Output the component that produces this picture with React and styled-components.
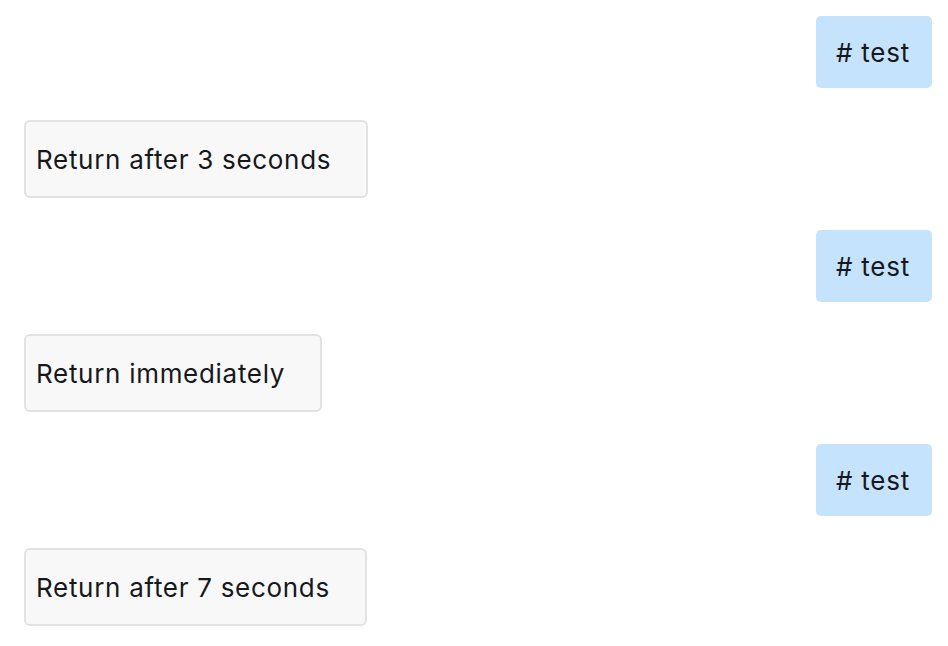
import React from "react";
import styled, { createGlobalStyle } from "styled-components";

const Global = createGlobalStyle`
  html, body { margin: 0; padding: 0; background: #ffffff; }
  body { font-family: Inter, "Noto Sans", "Liberation Sans", sans-serif; }
`;

const Chat = styled.div`
  display: flex;
  flex-direction: column;
  gap: 32px;
  padding: 16px 16px 16px 24px;
`;

const Row = styled.div`
  display: flex;
  justify-content: ${(p) => (p.$mine ? "flex-end" : "flex-start")};
`;

const UserBubble = styled.div`
  display: flex;
  align-items: center;
  height: 72px;
  box-sizing: border-box;
  padding: 0 22px 0 20px;
  background: #c5e3fd;
  border-radius: 5px;
  color: #16181c;
  font-size: 26px;
  letter-spacing: 0.75px;
`;

const BotBubble = styled.div`
  display: flex;
  align-items: center;
  height: 78px;
  box-sizing: border-box;
  padding: 0 35px 0 10px;
  background: #f8f8f8;
  border: 2px solid #e2e2e2;
  border-radius: 6px;
  color: #16181c;
  font-size: 26px;
  letter-spacing: 0.7px;
`;

const messages = [
  { mine: true, text: "# test" },
  { mine: false, text: "Return after 3 seconds" },
  { mine: true, text: "# test" },
  { mine: false, text: "Return immediately" },
  { mine: true, text: "# test" },
  { mine: false, text: "Return after 7 seconds" },
];

export default function App() {
  return (
    <>
      <Global />
      <Chat>
        {messages.map((m, i) => (
          <Row key={i} $mine={m.mine}>
            {m.mine ? <UserBubble>{m.text}</UserBubble> : <BotBubble>{m.text}</BotBubble>}
          </Row>
        ))}
      </Chat>
    </>
  );
}
